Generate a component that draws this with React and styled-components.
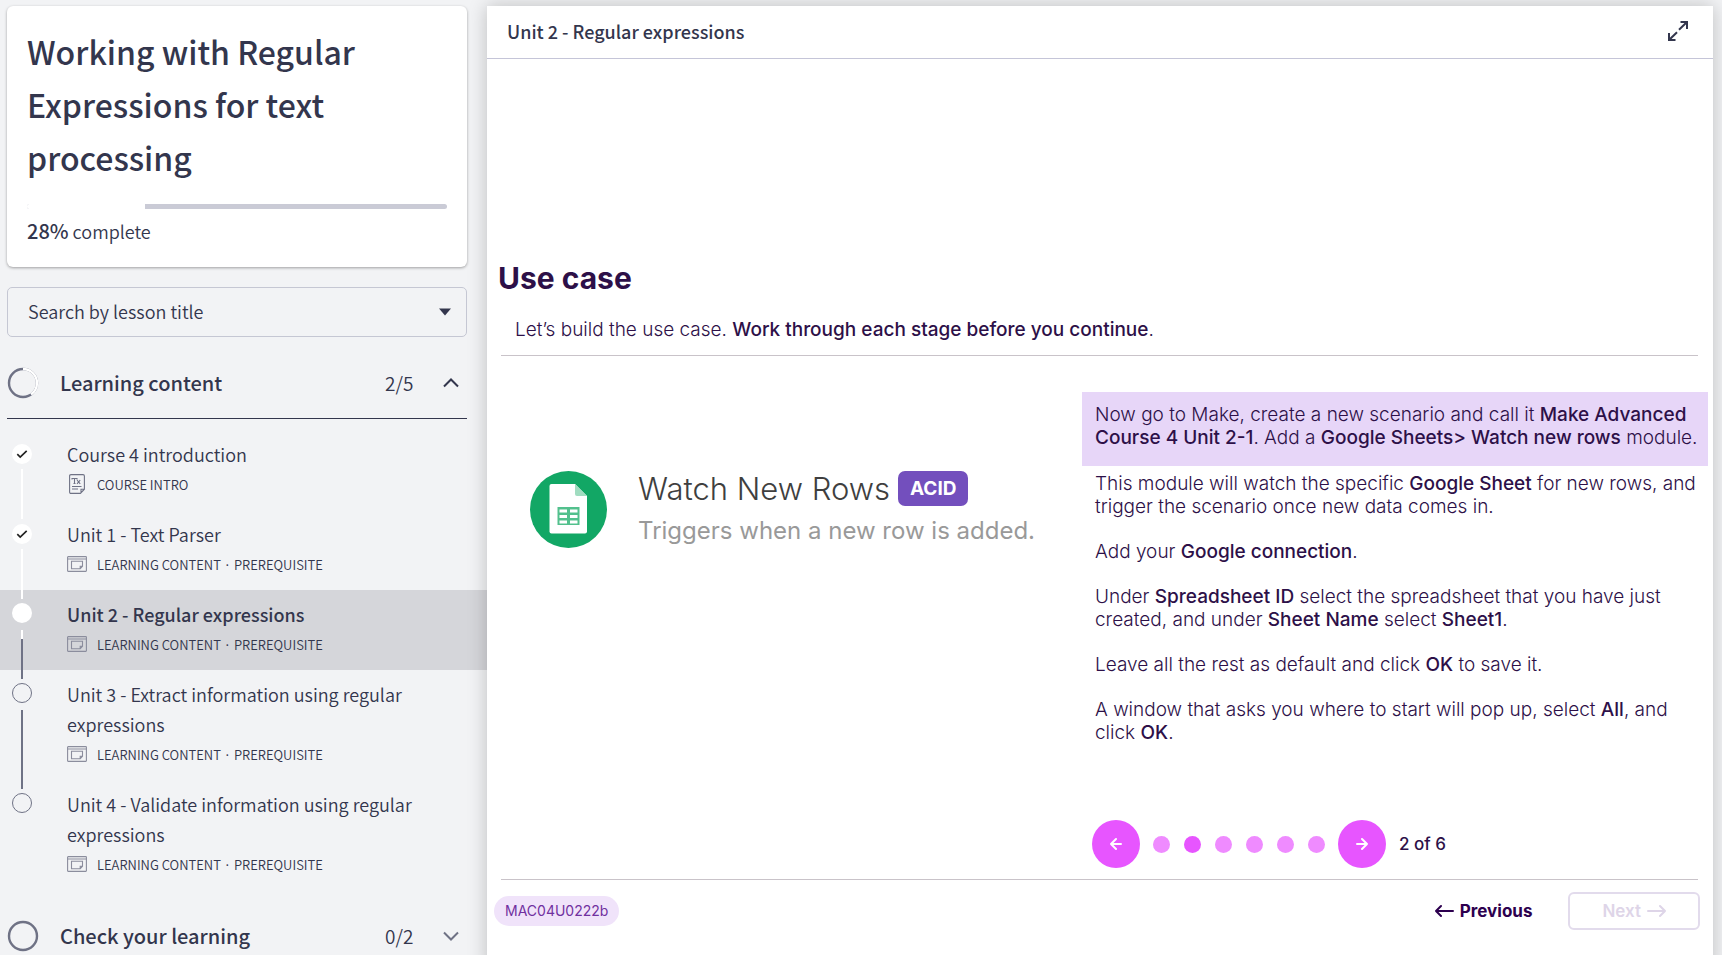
import React from "react";
import styled, { createGlobalStyle, css } from "styled-components";

const ink = "#33364d";
const slate = "#6f7285";
const plum = "#2d1048";
const pink = "#e755ff";

const GlobalStyle = createGlobalStyle`
  *, *::before, *::after { box-sizing: border-box; }
  body {
    margin: 0;
    background: #f2f3f5;
    color: ${ink};
    font-family: "Noto Sans CJK JP", "Noto Sans", sans-serif;
    font-size: 18px;
    font-weight: 350;
  }
  button, select { font: inherit; color: inherit; }
  h1, h2, p, ul, ol { margin: 0; padding: 0; }
  ul, ol { list-style: none; }
  svg { display: block; flex: none; }
`;

const Page = styled.div`
  display: grid;
  grid-template-columns: 487px minmax(0, 1fr);
  height: 100vh;
  overflow: hidden;
  padding: 6px 9px 0 0;
`;

/* Sidebar */

const Sidebar = styled.aside`
  min-width: 0;
`;

const CourseCard = styled.section`
  margin: 0 20px 0 7px;
  padding: 19px 20px 20px;
  background: #fff;
  border-radius: 6px;
  box-shadow: 0 1px 3px rgba(0, 0, 0, 0.35);
`;

const CourseTitle = styled.h1`
  font-size: 32px;
  font-weight: 500;
  line-height: 53px;
`;

const ProgressTrack = styled.div`
  height: 5px;
  margin: 20px 0 6px;
  border-radius: 3px;
  background: #cacbd6;
  overflow: hidden;
`;

const ProgressFill = styled.div`
  height: 100%;
  background: #fff;
`;

const ProgressText = styled.p`
  line-height: 32px;
  strong {
    font-size: 20px;
    font-weight: 500;
  }
`;

const SearchBox = styled.div`
  position: relative;
  margin: 20px 20px 11px 7px;
  svg {
    position: absolute;
    right: 16px;
    top: 21px;
    pointer-events: none;
  }
`;

const SearchSelect = styled.select`
  display: block;
  width: 100%;
  height: 50px;
  padding: 0 20px 2px;
  appearance: none;
  background: transparent;
  border: 1px solid #c5c7d3;
  border-radius: 5px;
`;

const SectionToggle = styled.button`
  display: grid;
  grid-template-columns: 53px 1fr 58px 16px;
  align-items: center;
  width: 460px;
  height: 71px;
  margin-left: 7px;
  padding: 0 8px 0 0;
  background: none;
  border: 0;
  border-bottom: 1px solid ${(p) => (p.$open ? ink : "transparent")};
  text-align: left;
`;

const SectionName = styled.span`
  padding-bottom: 2px;
  font-size: 20px;
  font-weight: 500;
`;

const SectionCount = styled.span`
  padding-bottom: 2px;
  font-size: 19px;
`;

const LessonList = styled.ol`
  padding: 11px 0;
`;

const Lesson = styled.li`
  display: flex;
  padding-right: 52px;
  background: ${(p) => (p.$current ? "#d5d6da" : "transparent")};
`;

const Rail = styled.div`
  display: flex;
  flex-direction: column;
  align-items: center;
  flex: none;
  width: 44px;
  margin-right: 23px;
  padding-top: ${(p) => (p.$done ? 14 : 13)}px;
`;

const Marker = styled.span`
  display: grid;
  place-items: center;
  flex: none;
  width: 20px;
  height: 20px;
  margin-bottom: ${(p) => (p.$state === "done" ? 5 : 7)}px;
  border-radius: 50%;
  ${(p) =>
    p.$state === "todo"
      ? css`
          border: 1px solid ${slate};
        `
      : css`
          background: #fff;
        `}
`;

const connectorFill = {
  done: "#fff",
  current: `linear-gradient(#fff 9px, ${slate} 9px)`,
  todo: slate,
};

const Connector = styled.span`
  position: relative;
  z-index: 1;
  flex: 1;
  width: 2px;
  margin-bottom: -9px;
  background: ${(p) => connectorFill[p.$state]};
`;

const LessonLink = styled.a`
  flex: 1;
  min-width: 0;
  padding: 9px 0 12px;
  color: inherit;
  text-decoration: none;
`;

const LessonTitle = styled.span`
  display: block;
  line-height: 30px;
  font-weight: ${(p) => (p.$current ? 500 : 350)};
`;

const LessonMeta = styled.span`
  display: grid;
  grid-template-columns: 20px 1fr;
  justify-items: center;
  align-items: center;
  gap: 10px;
  height: 28px;
  margin-top: 1px;
  font-size: 13px;
  text-transform: uppercase;
  span { justify-self: start; }
`;

/* Main panel */

const Panel = styled.main`
  display: flex;
  flex-direction: column;
  min-width: 0;
  background: #fff;
  box-shadow: 0 0 18px rgba(0, 0, 0, 0.22);
`;

const PanelHeader = styled.header`
  display: flex;
  align-items: center;
  justify-content: space-between;
  height: 53px;
  padding: 0 25px 2px 20px;
  border-bottom: 1px solid #c5c5d8;
`;

const PanelTitle = styled.h2`
  font-size: 18px;
  font-weight: 500;
`;

const IconButton = styled.button`
  padding: 0;
  background: none;
  border: 0;
`;

const Slide = styled.article`
  padding: 197px 5px 0 7px;
  color: ${plum};
  font-family: Inter, sans-serif;
  font-weight: 300;
  strong { font-weight: 500; }
`;

const SlideHeading = styled.h2`
  padding: 0 4px;
  font-size: 30px;
  font-weight: 700;
  line-height: 44px;
`;

const Intro = styled.p`
  margin: 0 10px 0 7px;
  padding: 18px 14px 13px;
  border-bottom: 1px solid #c9c3c9;
  font-size: 19px;
  line-height: 24px;
`;

const Columns = styled.div`
  display: grid;
  grid-template-columns: minmax(0, 1fr) 626px;
  margin-top: 36px;
  min-height: 487px;
`;

const ModuleCard = styled.section`
  display: flex;
  align-items: center;
  align-self: start;
  gap: 31px;
  padding: 74px 0 0 36px;
`;

const ModuleName = styled.div`
  display: flex;
  align-items: center;
  gap: 8px;
  height: 44px;
  color: #3f3f3f;
  font-size: 31px;
  font-weight: 350;
  white-space: nowrap;
`;

const AcidTag = styled.span`
  padding: 0 12px;
  border-radius: 7px;
  background: #734fbd;
  color: #fff;
  font-size: 19px;
  font-weight: 700;
  line-height: 35px;
`;

const ModuleNote = styled.p`
  color: #999;
  font-size: 24px;
  font-weight: 400;
  line-height: 42px;
  white-space: nowrap;
`;

const Steps = styled.section`
  font-size: 19px;
  line-height: 23px;
`;

const Callout = styled.p`
  padding: 11px 4px 17px 13px;
  background: #e7d6f8;
`;

const StepText = styled.div`
  display: grid;
  gap: 22px;
  padding: 6px 4px 0 13px;
`;

const Pager = styled.nav`
  display: flex;
  align-items: center;
  gap: 13px;
  margin-top: 76px;
  padding-left: 10px;
  font-size: 17px;
  font-weight: 500;
`;

const RoundButton = styled.button`
  display: grid;
  place-items: center;
  width: 48px;
  height: 48px;
  padding: 0;
  border: 0;
  border-radius: 50%;
  background: ${pink};
  color: #fff;
`;

const Dots = styled.div`
  display: flex;
  gap: 14px;
`;

const Dot = styled.span`
  width: 17px;
  height: 17px;
  border-radius: 50%;
  background: ${(p) => (p.$active ? pink : "#ef8bff")};
`;

const SlideFooter = styled.footer`
  display: flex;
  align-items: center;
  margin: 0 10px 0 7px;
  padding-top: 12px;
  border-top: 1px solid #c9c3c9;
`;

const CodeTag = styled.span`
  margin-left: -7px;
  margin-right: auto;
  padding: 0 11px;
  border-radius: 15px;
  background: #f0e3fa;
  color: #7030a0;
  font-size: 14px;
  font-weight: 400;
  line-height: 30px;
`;

const NavButton = styled.button`
  display: flex;
  align-items: center;
  justify-content: center;
  gap: 6px;
  height: 38px;
  padding: 0 32px;
  border: 2px solid ${(p) => (p.disabled ? "#e2dbec" : "transparent")};
  border-radius: 6px;
  margin-right: ${(p) => (p.disabled ? -2 : 2)}px;
  background: none;
  color: ${(p) => (p.disabled ? "#ded5e8" : "#2d004f")};
  font-size: 17px;
  font-weight: ${(p) => (p.disabled ? 600 : 700)};
`;

/* Icons */

const Chevron = ({ up }) => (
  <svg width="16" height="10" viewBox="0 0 16 10" fill="none" stroke={up ? ink : slate} strokeWidth="2">
    <path d={up ? "M1 8.5 8 1.5l7 7" : "M1 1.5l7 7 7-7"} />
  </svg>
);

const Arrow = ({ size, left, weight = 2 }) => (
  <svg width={size} height="14" viewBox={`0 0 ${size} 14`} fill="none" stroke="currentColor" strokeWidth={weight} strokeLinecap="round" strokeLinejoin="round">
    <path d={left ? `M${size - 1} 7H1M6 2 1 7l5 5` : `M1 7h${size - 2}M${size - 6} 2l5 5-5 5`} />
  </svg>
);

const Tick = () => (
  <svg width="12" height="10" viewBox="0 0 12 10" fill="none" stroke="#222" strokeWidth="1.7">
    <path d="M1.3 5.2 4.2 8 10.7 1.8" />
  </svg>
);

const RingProgress = ({ done }) => {
  const length = 2 * Math.PI * 14;
  return (
    <svg width="32" height="32" viewBox="0 0 32 32" fill="none" strokeWidth="2.4">
      <circle cx="16" cy="16" r="14" stroke={slate} />
      {done > 0 && (
        <circle cx="16" cy="16" r="14" stroke="#fff" strokeWidth="2.4" strokeDasharray={`${done * length} ${length}`} transform="rotate(-90 16 16)" />
      )}
    </svg>
  );
};

const DocIcon = () => (
  <svg width="16" height="20" viewBox="0 0 16 20" fill="none" stroke={slate} strokeWidth="1.1">
    <path d="M2 .6h12q1.4 0 1.4 1.4v13.2l-4 4.200H2Q.6 19.400.6 18V2Q.6.6 2 .6zM15.400 15.200h-3.400v4M3 12.500h9.500M3 15h6" />
    <path d="M3 5.600V4.500h5v1.100M5.500 4.500v5M4.500 9.500h2M8 6l3.200 3.800M11.200 6 8 9.800" />
  </svg>
);

const WindowIcon = () => (
  <svg width="20" height="16" viewBox="0 0 20 16" fill="none" stroke="#8b8d9d" strokeWidth="1.1">
    <rect x=".6" y=".6" width="18.800" height="14.800" rx=".6" />
    <path d="M.6 3h18.800M4.500 5.200h11v5l-2.300 2.500H4.500zM15.500 10.200h-2.300v2.500" />
  </svg>
);

const ExpandIcon = () => (
  <svg width="20" height="20" viewBox="0 0 20 20" fill="none" stroke={ink} strokeWidth="2">
    <path d="M12.500 1H19v7M19 1l-8 7.800M7.500 19H1v-7M1 19l8-7.800" />
  </svg>
);

const SheetsIcon = () => (
  <svg width="77" height="77" viewBox="0 0 77 77">
    <circle cx="38.500" cy="38.500" r="38.500" fill="#12a765" />
    <path d="M21.500 13H45l12 12v35.500q0 2-2 2H21.500q-2 0-2-2V15q0-2 2-2z" fill="#fff" />
    <path d="M45 13v10q0 2 2 2h10z" fill="#a0dcc0" />
    <path d="M27.500 36h22v18h-22z" fill="#52c08d" />
    <path d="M29.500 38.500h7.500v3h-7.500zM40 38.500h7.500v3H40zM29.500 44h7.500v3h-7.500zM40 44h7.500v3H40zM29.500 49.500h7.500v3h-7.500zM40 49.500h7.500v3H40z" fill="#fff" />
  </svg>
);

/* Content */

const lessons = [
  { title: "Course 4 introduction", meta: "Course intro", state: "done", doc: true },
  { title: "Unit 1 - Text Parser", meta: "Learning content · Prerequisite", state: "done" },
  { title: "Unit 2 - Regular expressions", meta: "Learning content · Prerequisite", state: "current" },
  { title: "Unit 3 - Extract information using regular expressions", meta: "Learning content · Prerequisite", state: "todo" },
  { title: "Unit 4 - Validate information using regular expressions", meta: "Learning content · Prerequisite", state: "todo" },
];

const percent = 28;

export default function App() {
  return (
    <>
      <GlobalStyle />
      <Page>
        <Sidebar>
          <CourseCard>
            <CourseTitle>Working with Regular Expressions for text processing</CourseTitle>
            <ProgressTrack>
              <ProgressFill style={{ width: `${percent}%` }} />
            </ProgressTrack>
            <ProgressText>
              <strong>{percent}%</strong> complete
            </ProgressText>
          </CourseCard>

          <SearchBox>
            <SearchSelect aria-label="Search by lesson title" defaultValue="">
              <option value="">Search by lesson title</option>
            </SearchSelect>
            <svg width="12" height="8" viewBox="0 0 12 8" fill={ink}>
              <path d="M0 .5h12L6 7.500z" />
            </svg>
          </SearchBox>

          <SectionToggle $open aria-expanded="true">
            <RingProgress done={0.4} />
            <SectionName>Learning content</SectionName>
            <SectionCount>2/5</SectionCount>
            <Chevron up />
          </SectionToggle>

          <LessonList>
            {lessons.map((lesson, index) => {
              const current = lesson.state === "current";
              return (
                <Lesson key={lesson.title} $current={current}>
                  <Rail $done={lesson.state === "done"}>
                    <Marker $state={lesson.state}>{lesson.state === "done" && <Tick />}</Marker>
                    {index < lessons.length - 1 && <Connector $state={lesson.state} />}
                  </Rail>
                  <LessonLink href="#lesson">
                    <LessonTitle $current={current}>{lesson.title}</LessonTitle>
                    <LessonMeta>
                      {lesson.doc ? <DocIcon /> : <WindowIcon />}
                      <span>{lesson.meta}</span>
                    </LessonMeta>
                  </LessonLink>
                </Lesson>
              );
            })}
          </LessonList>

          <SectionToggle aria-expanded="false">
            <RingProgress done={0} />
            <SectionName>Check your learning</SectionName>
            <SectionCount>0/2</SectionCount>
            <Chevron />
          </SectionToggle>
        </Sidebar>

        <Panel>
          <PanelHeader>
            <PanelTitle>Unit 2 - Regular expressions</PanelTitle>
            <IconButton aria-label="Full screen">
              <ExpandIcon />
            </IconButton>
          </PanelHeader>

          <Slide>
            <SlideHeading>Use case</SlideHeading>
            <Intro>
              Let’s build the use case. <strong>Work through each stage before you continue</strong>.
            </Intro>

            <Columns>
              <ModuleCard>
                <SheetsIcon />
                <div>
                  <ModuleName>
                    Watch New Rows <AcidTag>ACID</AcidTag>
                  </ModuleName>
                  <ModuleNote>Triggers when a new row is added.</ModuleNote>
                </div>
              </ModuleCard>

              <Steps>
                <Callout>
                  Now go to Make, create a new scenario and call it <strong>Make Advanced Course 4 Unit 2-1</strong>. Add
                  a <strong>Google Sheets&gt; Watch new rows</strong> module.
                </Callout>
                <StepText>
                  <p>
                    This module will watch the specific <strong>Google Sheet</strong> for new rows, and trigger the
                    scenario once new data comes in.
                  </p>
                  <p>
                    Add your <strong>Google connection</strong>.
                  </p>
                  <p>
                    Under <strong>Spreadsheet ID</strong> select the spreadsheet that you have just created, and under{" "}
                    <strong>Sheet Name</strong> select <strong>Sheet1</strong>.
                  </p>
                  <p>
                    Leave all the rest as default and click <strong>OK</strong> to save it.
                  </p>
                  <p>
                    A window that asks you where to start will pop up, select <strong>All</strong>, and click{" "}
                    <strong>OK</strong>.
                  </p>
                </StepText>
                <Pager aria-label="Steps">
                  <RoundButton aria-label="Previous step">
                    <Arrow size={12} left />
                  </RoundButton>
                  <Dots>
                    {[1, 2, 3, 4, 5, 6].map((step) => (
                      <Dot key={step} $active={step === 2} />
                    ))}
                  </Dots>
                  <RoundButton aria-label="Next step">
                    <Arrow size={12} />
                  </RoundButton>
                  <span>2 of 6</span>
                </Pager>
              </Steps>
            </Columns>

            <SlideFooter>
              <CodeTag>MAC04U0222b</CodeTag>
              <NavButton>
                <Arrow size={19} left />
                Previous
              </NavButton>
              <NavButton disabled>
                Next
                <Arrow size={19} />
              </NavButton>
            </SlideFooter>
          </Slide>
        </Panel>
      </Page>
    </>
  );
}
